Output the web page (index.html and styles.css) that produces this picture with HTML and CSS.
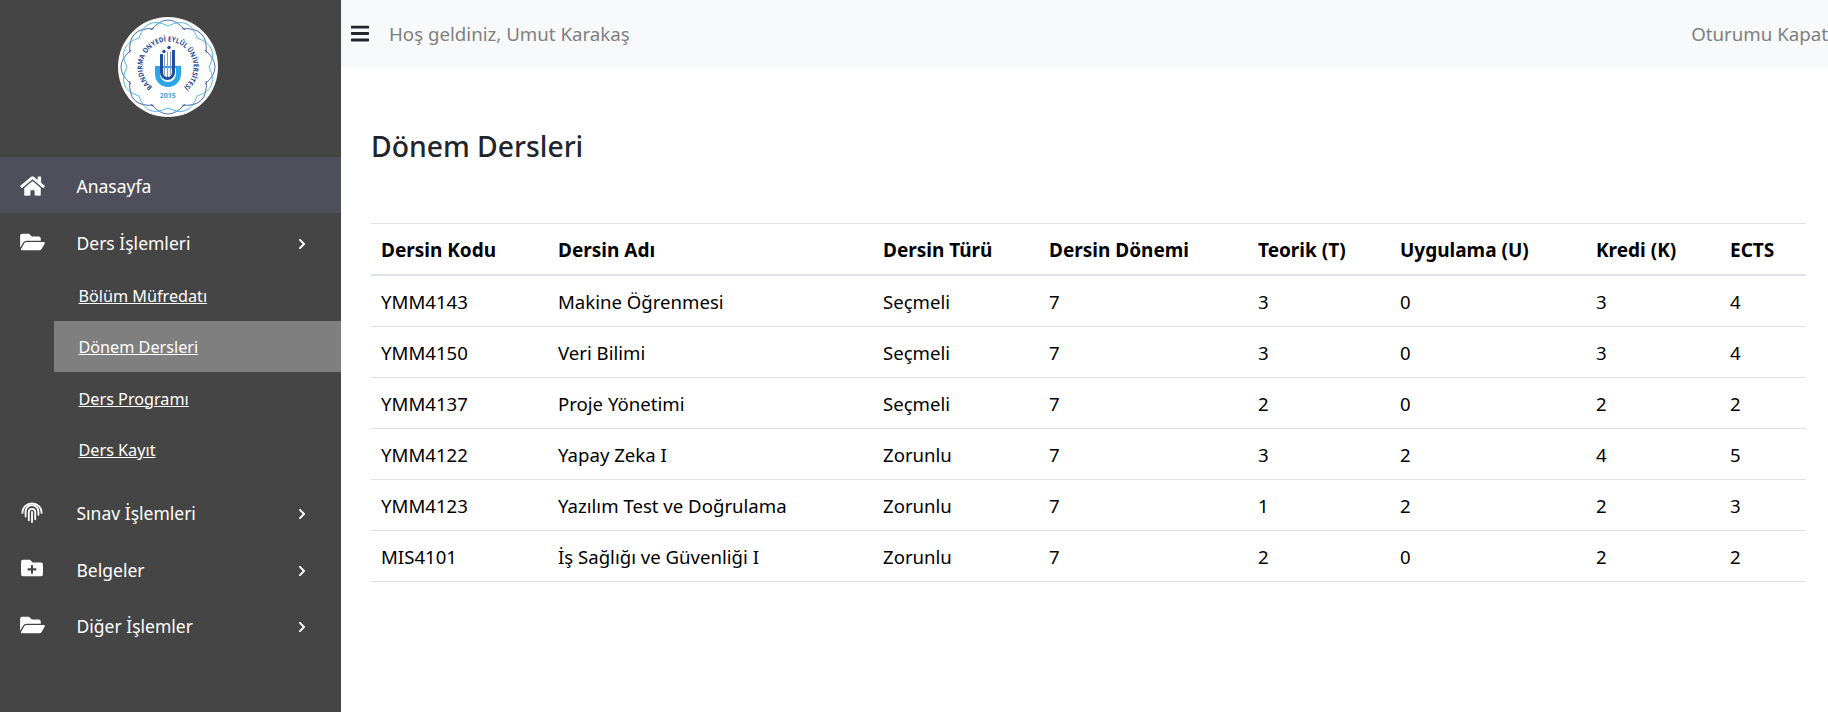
FILE: index.html
```html
<!DOCTYPE html>
<html lang="tr">
<head>
<meta charset="utf-8">
<title>Dönem Dersleri</title>
<link rel="stylesheet" href="styles.css">
</head>
<body>
<div class="app">
  <aside class="sidebar">
    <div class="brand">
      <svg class="logo" viewBox="0 0 100 100" aria-label="Bandırma Onyedi Eylül Üniversitesi">
        <defs>
          <path id="lobe-light" d="M0 -41 Q21.500 -51.800 29 -29" fill="none" stroke="#35a9e4" stroke-width=".8"/>
          <path id="lobe-dark" d="M-17 -37 Q0 -57 17 -37" fill="none" stroke="#2b4f9e" stroke-width=".8"/>
          <path id="arc" d="M35 70.600 A25.500 25.500 0 1 1 65 70.600"/>
        </defs>
        <circle cx="50" cy="50" r="50" fill="#fff"/>
        <g transform="translate(50 50)">
          <use href="#lobe-dark"/>
          <use href="#lobe-dark" transform="rotate(45)"/>
          <use href="#lobe-dark" transform="rotate(90)"/>
          <use href="#lobe-dark" transform="rotate(135)"/>
          <use href="#lobe-dark" transform="rotate(180)"/>
          <use href="#lobe-dark" transform="rotate(225)"/>
          <use href="#lobe-dark" transform="rotate(270)"/>
          <use href="#lobe-dark" transform="rotate(315)"/>
          <use href="#lobe-light"/>
          <use href="#lobe-light" transform="rotate(45)"/>
          <use href="#lobe-light" transform="rotate(90)"/>
          <use href="#lobe-light" transform="rotate(135)"/>
          <use href="#lobe-light" transform="rotate(180)"/>
          <use href="#lobe-light" transform="rotate(225)"/>
          <use href="#lobe-light" transform="rotate(270)"/>
          <use href="#lobe-light" transform="rotate(315)"/>
        </g>
        <text class="logo-text"><textPath href="#arc" startOffset="50%" text-anchor="middle" textLength="126" lengthAdjust="spacingAndGlyphs">BANDIRMA ONYEDİ EYLÜL ÜNİVERSİTESİ</textPath></text>
        <path d="M39.500 49 V57 A10.500 10.500 0 0 0 60.500 57 V49" fill="none" stroke="#2ba6e6" stroke-width="5"/>
        <path d="M37 50 H63" stroke="#2ba6e6" stroke-width="2.200"/>
        <path d="M46.500 38 V58 M49.500 35 V60 M52.500 35 V58" stroke="#8a9cc0" stroke-width="1"/>
        <path d="M43.500 37 V55.500 A6 6 0 0 0 55.500 55.500 V33" fill="none" stroke="#1d4f9f" stroke-width="3"/>
        <circle cx="46" cy="34.500" r="1.700" fill="#1d4f9f"/>
        <circle cx="51" cy="30.500" r="1.700" fill="#1d4f9f"/>
        <text class="logo-year" x="49.700" y="80.500" text-anchor="middle">2015</text>
      </svg>
    </div>
    <nav class="menu">
      <a class="item item-home">
        <svg class="ico" viewBox="0 0 576 512"><path d="M280.37 148.26L96 300.11V464a16 16 0 0 0 16 16l112.06-.29a16 16 0 0 0 15.92-16V368a16 16 0 0 1 16-16h64a16 16 0 0 1 16 16v95.64a16 16 0 0 0 16 16.05L464 480a16 16 0 0 0 16-16V300L295.67 148.26a12.19 12.19 0 0 0-15.3 0zM571.6 251.47L488 182.56V44.05a12 12 0 0 0-12-12h-56a12 12 0 0 0-12 12v72.61L318.47 43a48 48 0 0 0-61 0L4.34 251.47a12 12 0 0 0-1.6 16.9l25.5 31A12 12 0 0 0 45.15 301l235.22-193.74a12.19 12.19 0 0 1 15.3 0L530.9 301a12 12 0 0 0 16.9-1.6l25.5-31a12 12 0 0 0-1.7-16.93z"/></svg>
        <span class="label">Anasayfa</span>
      </a>
      <a class="item">
        <svg class="ico" viewBox="0 0 576 512"><path d="M572.694 292.093L500.27 416.248A63.997 63.997 0 0 1 444.989 448H45.025c-18.523 0-30.064-20.093-20.731-36.093l72.424-124.155A64 64 0 0 1 152 256h399.964c18.523 0 30.064 20.093 20.73 36.093zM152 224h328v-48c0-26.51-21.49-48-48-48H272l-64-64H48C21.49 64 0 85.49 0 112v278.046l69.077-118.418C86.214 242.25 117.989 224 152 224z"/></svg>
        <span class="label">Ders İşlemleri</span>
        <svg class="chev" viewBox="0 0 320 512"><path d="M285.476 272.971L91.132 467.314c-9.373 9.373-24.569 9.373-33.941 0l-22.667-22.667c-9.357-9.357-9.375-24.522-.04-33.901L188.505 256 34.484 101.255c-9.335-9.379-9.317-24.544.04-33.901l22.667-22.667c9.373-9.373 24.569-9.373 33.941 0L285.475 239.03c9.373 9.372 9.373 24.568.001 33.941z"/></svg>
      </a>
      <div class="submenu">
        <a class="sub">Bölüm Müfredatı</a>
        <a class="sub sub-active">Dönem Dersleri</a>
        <a class="sub">Ders Programı</a>
        <a class="sub">Ders Kayıt</a>
      </div>
      <a class="item">
        <svg class="ico ico-finger" viewBox="0 0 24 24"><path d="M1.500 13 A10.500 10.500 0 0 1 22.500 13"/><path d="M5 17 V11.500 A7 7 0 0 1 19 11.500 V15"/><path d="M8.500 21 V12 A3.500 3.500 0 0 1 15.500 12 V20"/><path d="M12 12 V23"/></svg>
        <span class="label">Sınav İşlemleri</span>
        <svg class="chev" viewBox="0 0 320 512"><path d="M285.476 272.971L91.132 467.314c-9.373 9.373-24.569 9.373-33.941 0l-22.667-22.667c-9.357-9.357-9.375-24.522-.04-33.901L188.505 256 34.484 101.255c-9.335-9.379-9.317-24.544.04-33.901l22.667-22.667c9.373-9.373 24.569-9.373 33.941 0L285.475 239.03c9.373 9.372 9.373 24.568.001 33.941z"/></svg>
      </a>
      <a class="item">
        <svg class="ico ico-plus" viewBox="0 0 512 512"><path d="M464,128H272L208,64H48A48,48,0,0,0,0,112V400a48,48,0,0,0,48,48H464a48,48,0,0,0,48-48V176A48,48,0,0,0,464,128ZM359.500,296a16,16,0,0,1-16,16h-64v64a16,16,0,0,1-16,16h-16a16,16,0,0,1-16-16V312h-64a16,16,0,0,1-16-16V280a16,16,0,0,1,16-16h64V200a16,16,0,0,1,16-16h16a16,16,0,0,1,16,16v64h64a16,16,0,0,1,16,16Z"/></svg>
        <span class="label">Belgeler</span>
        <svg class="chev" viewBox="0 0 320 512"><path d="M285.476 272.971L91.132 467.314c-9.373 9.373-24.569 9.373-33.941 0l-22.667-22.667c-9.357-9.357-9.375-24.522-.04-33.901L188.505 256 34.484 101.255c-9.335-9.379-9.317-24.544.04-33.901l22.667-22.667c9.373-9.373 24.569-9.373 33.941 0L285.475 239.03c9.373 9.372 9.373 24.568.001 33.941z"/></svg>
      </a>
      <a class="item">
        <svg class="ico" viewBox="0 0 576 512"><path d="M572.694 292.093L500.27 416.248A63.997 63.997 0 0 1 444.989 448H45.025c-18.523 0-30.064-20.093-20.731-36.093l72.424-124.155A64 64 0 0 1 152 256h399.964c18.523 0 30.064 20.093 20.73 36.093zM152 224h328v-48c0-26.51-21.49-48-48-48H272l-64-64H48C21.49 64 0 85.49 0 112v278.046l69.077-118.418C86.214 242.25 117.989 224 152 224z"/></svg>
        <span class="label">Diğer İşlemler</span>
        <svg class="chev" viewBox="0 0 320 512"><path d="M285.476 272.971L91.132 467.314c-9.373 9.373-24.569 9.373-33.941 0l-22.667-22.667c-9.357-9.357-9.375-24.522-.04-33.901L188.505 256 34.484 101.255c-9.335-9.379-9.317-24.544.04-33.901l22.667-22.667c9.373-9.373 24.569-9.373 33.941 0L285.475 239.03c9.373 9.372 9.373 24.568.001 33.941z"/></svg>
      </a>
    </nav>
  </aside>
  <div class="main">
    <header class="topbar">
      <svg class="bars" viewBox="0 0 448 512"><path d="M16 132h416c8.837 0 16-7.163 16-16V76c0-8.837-7.163-16-16-16H16C7.163 60 0 67.163 0 76v40c0 8.837 7.163 16 16 16zm0 160h416c8.837 0 16-7.163 16-16v-40c0-8.837-7.163-16-16-16H16c-8.837 0-16 7.163-16 16v40c0 8.837 7.163 16 16 16zm0 160h416c8.837 0 16-7.163 16-16v-40c0-8.837-7.163-16-16-16H16c-8.837 0-16 7.163-16 16v40c0 8.837 7.163 16 16 16z"/></svg>
      <span class="welcome">Hoş geldiniz, Umut Karakaş</span>
      <a class="logout">Oturumu Kapat</a>
    </header>
    <main class="content">
      <h2 class="title">Dönem Dersleri</h2>
      <table class="grid">
        <colgroup>
          <col class="c1"><col class="c2"><col class="c3"><col class="c4"><col class="c5"><col class="c6"><col class="c7"><col class="c8">
        </colgroup>
        <thead>
          <tr><th>Dersin Kodu</th><th>Dersin Adı</th><th>Dersin Türü</th><th>Dersin Dönemi</th><th>Teorik (T)</th><th>Uygulama (U)</th><th>Kredi (K)</th><th>ECTS</th></tr>
        </thead>
        <tbody>
          <tr><td>YMM4143</td><td>Makine Öğrenmesi</td><td>Seçmeli</td><td>7</td><td>3</td><td>0</td><td>3</td><td>4</td></tr>
          <tr><td>YMM4150</td><td>Veri Bilimi</td><td>Seçmeli</td><td>7</td><td>3</td><td>0</td><td>3</td><td>4</td></tr>
          <tr><td>YMM4137</td><td>Proje Yönetimi</td><td>Seçmeli</td><td>7</td><td>2</td><td>0</td><td>2</td><td>2</td></tr>
          <tr><td>YMM4122</td><td>Yapay Zeka I</td><td>Zorunlu</td><td>7</td><td>3</td><td>2</td><td>4</td><td>5</td></tr>
          <tr><td>YMM4123</td><td>Yazılım Test ve Doğrulama</td><td>Zorunlu</td><td>7</td><td>1</td><td>2</td><td>2</td><td>3</td></tr>
          <tr><td>MIS4101</td><td>İş Sağlığı ve Güvenliği I</td><td>Zorunlu</td><td>7</td><td>2</td><td>0</td><td>2</td><td>2</td></tr>
        </tbody>
      </table>
    </main>
  </div>
</div>
</body>
</html>
```
FILE: styles.css
```css
* { box-sizing: border-box; }
html, body { margin: 0; height: 100%; }
body {
  font-family: "Noto Sans", "Open Sans", sans-serif;
  font-size: 17px;
  color: #000;
  background: #fff;
  overflow: hidden;
}
.app { display: flex; height: 712px; }

.sidebar { width: 341px; flex: none; background: #454545; color: #fff; }
.brand { height: 157px; padding: 17px 5px 0 0; display: flex; justify-content: center; align-items: flex-start; }
.logo { width: 100px; height: 100px; display: block; }
.logo-text { font-family: "Open Sans", sans-serif; font-size: 7px; font-weight: 700; fill: #1f4a96; }
.logo-year { font-family: "Open Sans", sans-serif; font-size: 7px; font-weight: 700; fill: #3aa8e6; }

.menu { display: flex; flex-direction: column; }
.item { display: flex; align-items: center; height: 56.500px; padding-left: 20px; color: #fff; font-size: 17.500px; }
.item-home { height: 56px; background: #4f4f5b; }
.item-home .label { padding-top: 2px; }
.ico { width: 25px; height: 22px; fill: #fff; flex: none; margin-right: 31.500px; margin-top: 1px; }
.ico-finger { width: 22px; margin-left: 1px; margin-right: 33.500px; fill: none; stroke: #fff; stroke-width: 2; stroke-linecap: round; }
.ico-plus { width: 22px; height: 24px; margin-left: 1px; margin-right: 33.500px; }
.label { flex: 1; padding-top: 4px; }
.chev { width: 10px; height: 12px; fill: #fff; flex: none; margin-right: 34.500px; margin-top: 6px; }

.submenu { display: flex; flex-direction: column; padding-left: 54px; margin-bottom: 8.500px; }
.sub { display: flex; align-items: center; height: 51.300px; padding: 2px 0 0 24.500px; color: #fff; font-size: 16.200px; text-decoration: underline; }
.sub-active { background: #7f7f7f; }

.main { flex: 1; min-width: 0; display: flex; flex-direction: column; }
.topbar { height: 67px; background: #f8f9fa; display: flex; align-items: center; padding-left: 10px; }
.bars { width: 18px; height: 21px; fill: #212529; flex: none; margin-right: 20px; }
.welcome { flex: 1; color: #808080; font-size: 18.700px; }
.logout { color: #808080; font-size: 18.700px; white-space: nowrap; }

.content { padding: 63px 22px 0 30px; }
.title { margin: 0 0 60px; font-size: 28.300px; font-weight: 500; line-height: 33px; color: #212529; }

.grid { width: 1435px; table-layout: fixed; border-collapse: collapse; }
.c1 { width: 177px; } .c2 { width: 325px; } .c3 { width: 166px; } .c4 { width: 209px; }
.c5 { width: 142px; } .c6 { width: 196px; } .c7 { width: 134px; } .c8 { width: 86px; }
.grid th, .grid td { text-align: left; padding: 13px 10px 11px; border-top: 1px solid #dee2e6; font-size: 18.600px; line-height: 26px; white-space: nowrap; }
.grid th { font-size: 19px; font-weight: 700; border-bottom: 2px solid #dee2e6; }
.grid tbody tr:last-child td { border-bottom: 1px solid #dee2e6; }
```
